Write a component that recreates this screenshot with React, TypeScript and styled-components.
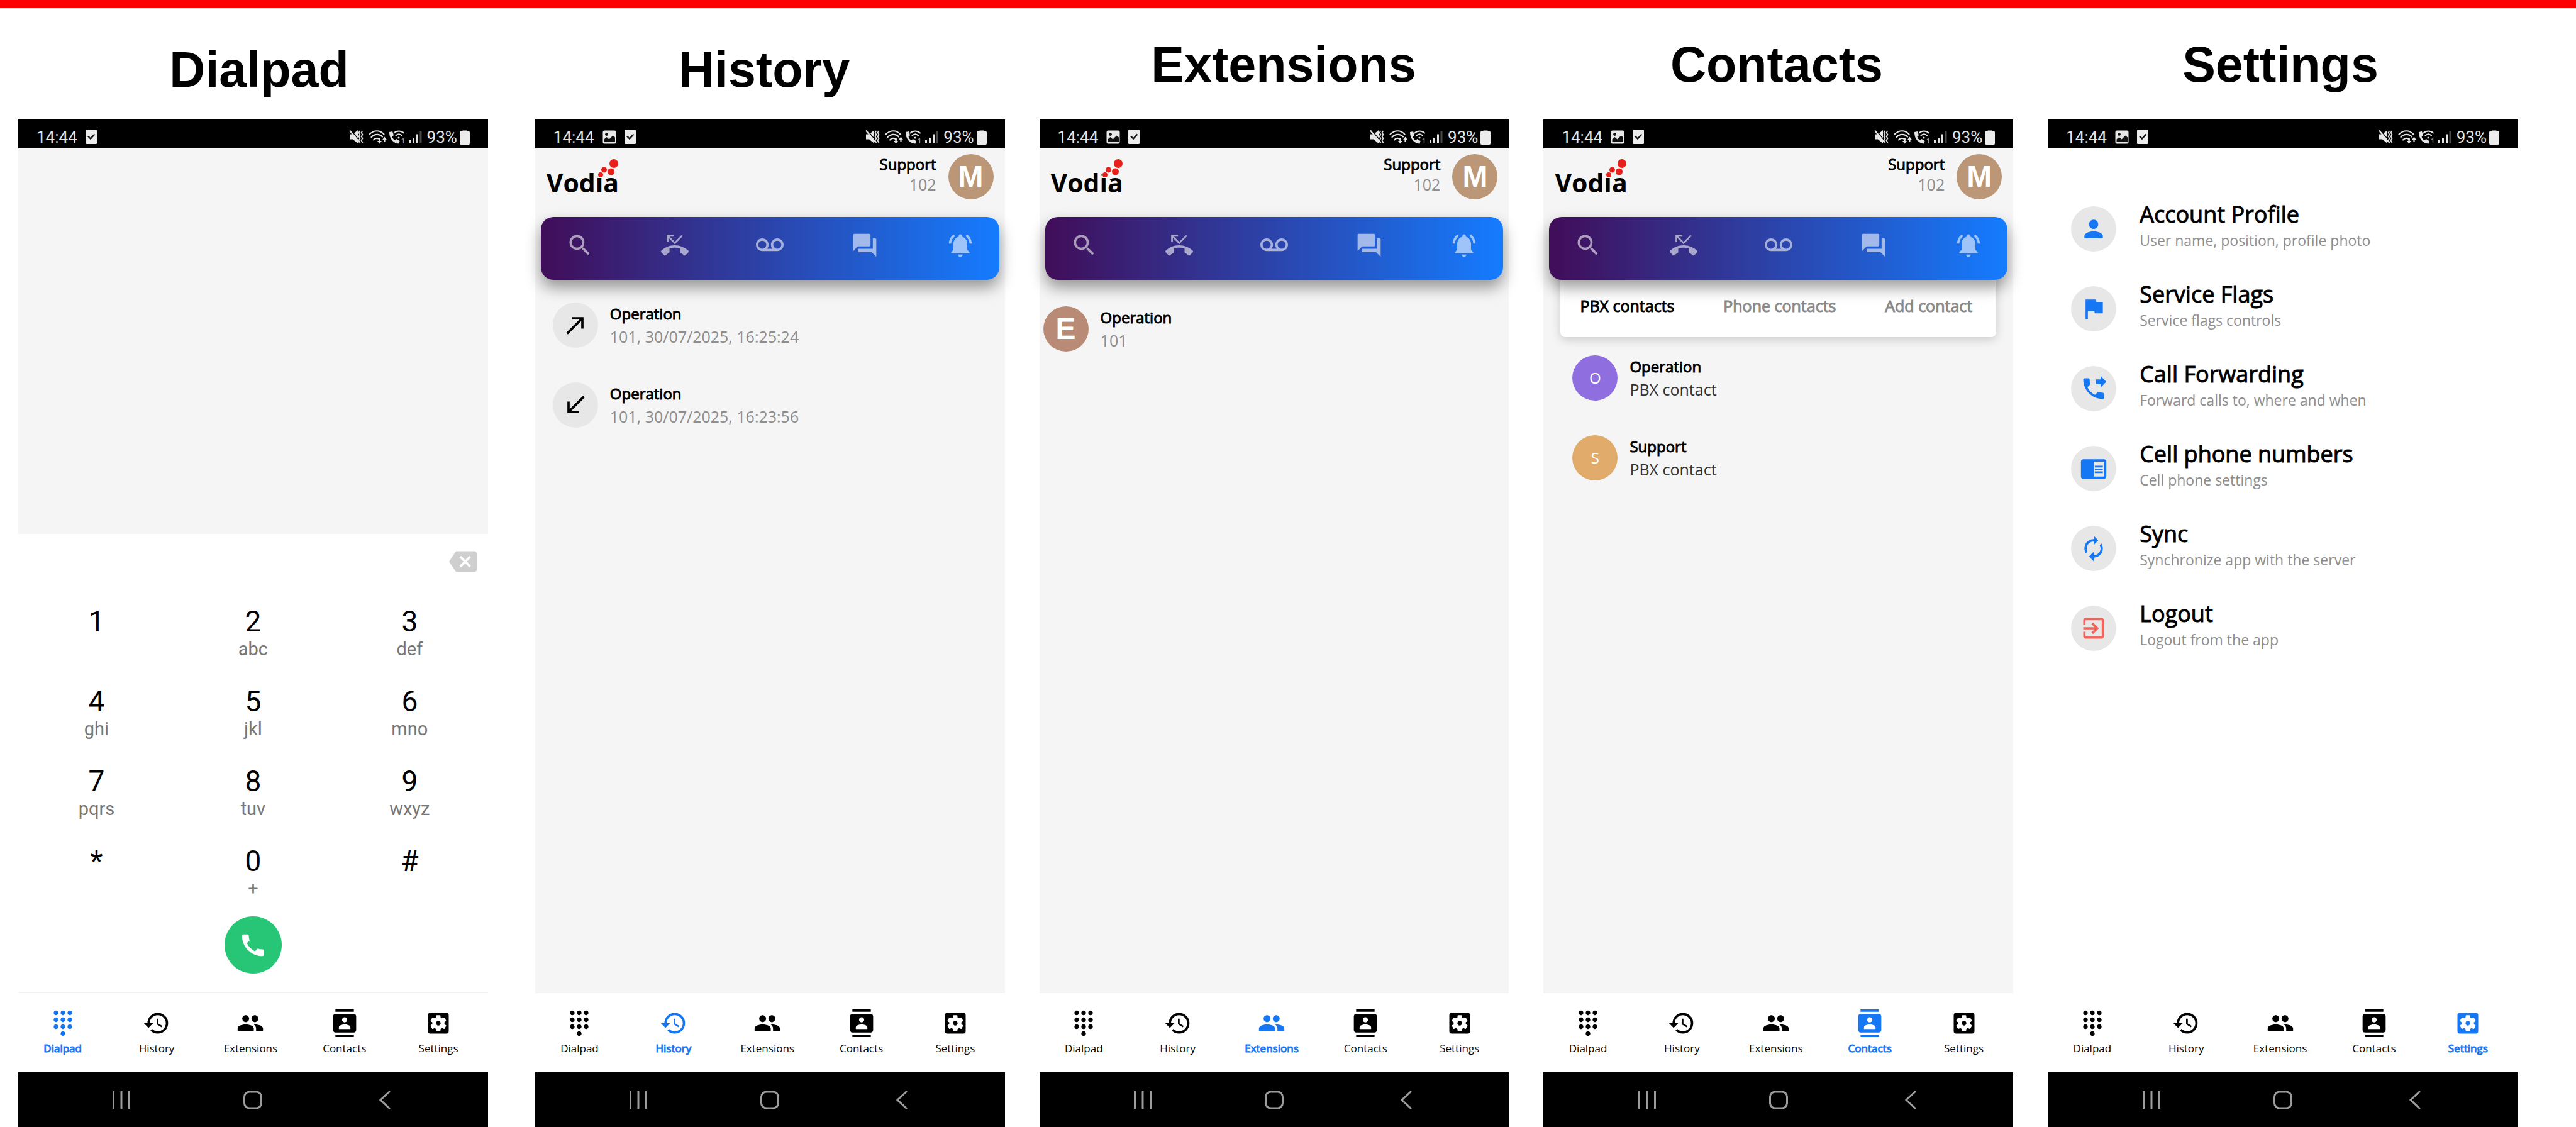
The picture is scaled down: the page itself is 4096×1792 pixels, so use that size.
import React from "react";
import styled, { createGlobalStyle } from "styled-components";
import type { IconType } from "react-icons";
import {
  MdAutorenew,
  MdBackspace,
  MdCall,
  MdCallMade,
  MdCallReceived,
  MdChromeReaderMode,
  MdContacts,
  MdDialpad,
  MdExitToApp,
  MdFlag,
  MdForum,
  MdHistory,
  MdNotificationsActive,
  MdPeople,
  MdPerson,
  MdPhoneForwarded,
  MdPhoneMissed,
  MdSearch,
  MdSettingsApplications,
  MdVoicemail,
} from "react-icons/md";

const BLUE = "#1677f5";
const UI_FONT = '"Open Sans", "Noto Sans", sans-serif';
const HEADING_FONT = '"Liberation Sans", Arial, sans-serif';
const SYSTEM_FONT = "Roboto, sans-serif";

const GlobalStyle = createGlobalStyle`
  *, *::before, *::after { box-sizing: border-box; }
  body { margin: 0; background: #fff; color: #000; font-family: ${UI_FONT}; }
  button {
    margin: 0; padding: 0; border: 0; background: none;
    font: inherit; color: inherit; cursor: pointer;
  }
  h1, h2, p, ul { margin: 0; padding: 0; }
  ul { list-style: none; }
  svg { display: block; }
`;

/* ---------- Page ---------- */

const Page = styled.main`
  display: flex;
  flex-direction: column;
  min-height: 100vh;
  border-top: 13px solid #ff0000;
`;

const Titles = styled.header`
  display: grid;
  grid-template-columns: 824fr 782fr 870fr 698fr 904fr 18fr;
  height: 177px;
  padding-top: 44px;
`;

const Title = styled.h1<{ $low?: boolean }>`
  padding-top: ${(p) => (p.$low ? 8 : 0)}px;
  font: bold 79px/92px ${HEADING_FONT};
  text-align: center;
`;

const Phones = styled.div`
  display: flex;
  flex: 1;
  gap: 55px;
  padding: 0 93px 0 29px;
`;

const Phone = styled.section<{ $spaced?: boolean }>`
  display: flex;
  flex: 1 1 0;
  flex-direction: column;
  margin-right: ${(p) => (p.$spaced ? 20 : 0)}px;
`;

const Screen = styled.div<{ $tone?: string }>`
  display: flex;
  flex: 1;
  flex-direction: column;
  background: ${(p) => p.$tone ?? "#f5f5f5"};
`;

/* ---------- Status bar ---------- */

const StatusBar = styled.div`
  display: flex;
  align-items: center;
  justify-content: space-between;
  height: 46px;
  padding: 9px 29px 0;
  background: #000;
  color: #e4e4e4;
  font: 26px/30px ${SYSTEM_FONT};
`;

const StatusGroup = styled.div<{ $gap: number }>`
  display: flex;
  align-items: center;
  gap: ${(p) => p.$gap}px;
`;

const Battery = styled.span`
  display: flex;
  align-items: center;
  gap: 4px;
`;

const ImageGlyph = () => (
  <svg width="22" height="22" viewBox="0 0 22 22" aria-hidden="true">
    <rect x="0.5" y="0.5" width="21" height="21" rx="2.5" fill="#e8e8e8" />
    <circle cx="6.5" cy="6.5" r="2.4" fill="#111" />
    <path d="M2.5 18.5v-4l4-3.5 4 3.5 6-6 3.5 3v7z" fill="#111" />
  </svg>
);

const TaskGlyph = () => (
  <svg width="18" height="23" viewBox="0 0 18 23" aria-hidden="true">
    <rect width="18" height="23" rx="1.5" fill="#ececec" />
    <path d="M4 10.5l4 4 6.5-7" fill="none" stroke="#111" strokeWidth="2.4" />
  </svg>
);

const SignalGlyphs = () => (
  <svg width="116" height="26" viewBox="0 0 116 26" aria-hidden="true">
    {/* muted with vibration */}
    <path d="M1 8.5h5L14 2v21l-8-6.5H1z" fill="#e8e8e8" />
    <path d="M2.500 1.500l14 17" stroke="#000" strokeWidth="1.4" />
    <path d="M1 2.500L16 21" stroke="#e8e8e8" strokeWidth="2.2" />
    <path
      d="M17.500 3l-2 3 2 3-2 3 2 3-2 3 2 4M21.500 3l-2 3 2 3-2 3 2 3-2 3 2 4"
      fill="none"
      stroke="#e4e4e4"
      strokeWidth="1.8"
    />
    {/* wifi with traffic arrows */}
    <g fill="none" stroke="#e4e4e4" strokeWidth="2.2" strokeLinecap="round">
      <path d="M32.500 8.500c7-7 17-7 23 0" />
      <path d="M35.500 13c5-5.500 13-5.500 17.500-.5" />
      <path d="M39 17.500c3-3.500 7.500-3.500 10-.5" />
    </g>
    <path d="M48.500 23.500l-3.500-4.500h2.400v-4h2.400v4H52z" fill="#e4e4e4" />
    <path d="M56.500 12.500l3.300 4.500h-2.200v4h-2.200v-4h-2.200z" fill="#e4e4e4" />
    {/* wifi calling */}
    <path
      d="M64 5c0 11 6.500 18 15.500 18.500l1-4.500-5-3-2.500 2c-2-1-3.800-3.500-4.500-5.500l2.500-2.500L69 4z"
      fill="#e4e4e4"
    />
    <g fill="none" stroke="#e4e4e4" strokeWidth="2" strokeLinecap="round">
      <path d="M71.500 6.500c4.500-4 11-4 15.500 0" />
      <path d="M74.500 10.500c3-2.800 6.500-2.800 9.500 0" />
    </g>
    <circle cx="79" cy="14" r="1.6" fill="#e4e4e4" />
    <text x="83" y="23" fill="#b5b5b5" fontFamily="Roboto, sans-serif" fontSize="11">
      1
    </text>
    {/* signal strength */}
    <path d="M95 18h3v5h-3zM101 14h3v9h-3zM107 8.500h3V23h-3z" fill="#e4e4e4" />
    <path d="M112.500 3h3v20h-3z" fill="#4a4a4a" />
  </svg>
);

const BatteryGlyph = () => (
  <svg width="16" height="24" viewBox="0 0 16 24" aria-hidden="true">
    <path d="M4.500 0h7v3h-7z" fill="#777" />
    <rect y="2.5" width="16" height="21.5" rx="2" fill="#ececec" />
  </svg>
);

const Status = ({ withImage }: { withImage: boolean }) => (
  <StatusBar>
    <StatusGroup $gap={13}>
      <span>14:44</span>
      {withImage && <ImageGlyph />}
      <TaskGlyph />
    </StatusGroup>
    <StatusGroup $gap={8}>
      <SignalGlyphs />
      <Battery>
        93%
        <BatteryGlyph />
      </Battery>
    </StatusGroup>
  </StatusBar>
);

/* ---------- App header ---------- */

const AppHeader = styled.div`
  display: flex;
  align-items: flex-start;
  height: 109px;
  padding: 9px 18px 0;
`;

const Logo = styled.div`
  position: relative;
  margin: 18px auto 0 0;
  font: bold 41px/54px ${UI_FONT};
`;

const LogoDots = styled.svg`
  position: absolute;
  top: -11px;
  left: 81px;
`;

const Account = styled.div`
  margin-right: 19px;
  text-align: right;
  line-height: 32px;
`;

const Name = styled.p`
  font-size: 24px;
  -webkit-text-stroke: 1px currentColor;
`;

const Detail = styled.p<{ $dark?: boolean }>`
  color: ${(p) => (p.$dark ? "#333" : "#8e8e8e")};
  font-size: 25px;
`;

const Avatar = styled.span<{ $tone: string; $letter?: boolean }>`
  display: flex;
  flex: none;
  align-items: center;
  justify-content: center;
  width: 72px;
  height: 72px;
  border-radius: 50%;
  background: ${(p) => p.$tone};
  color: #fff;
  font: ${(p) => (p.$letter ? `bold 48px/54px ${HEADING_FONT}` : `24px/34px ${UI_FONT}`)};
`;

const IconDisc = styled(Avatar).attrs({ $tone: "#e7e7e7" })<{ $ink?: string }>`
  color: ${(p) => p.$ink ?? "#000"};
`;

const Toolbar = styled.nav`
  position: relative;
  display: flex;
  flex: none;
  align-items: center;
  justify-content: space-between;
  height: 100px;
  margin: 0 9px;
  padding: 0 40px 10px;
  border-radius: 20px;
  background: linear-gradient(90deg, #410d58, #157cff);
  box-shadow: 0 12px 24px rgba(0, 0, 0, 0.4);
  color: rgba(255, 255, 255, 0.58);
`;

const TOOLS: [string, IconType][] = [
  ["Search", MdSearch],
  ["Missed calls", MdPhoneMissed],
  ["Voicemail", MdVoicemail],
  ["Messages", MdForum],
  ["Notifications", MdNotificationsActive],
];

const AppTop = () => (
  <>
    <AppHeader>
      <Logo>
        Vodia
        <LogoDots width="34" height="38" viewBox="0 0 34 38" aria-hidden="true">
          <circle cx="5" cy="25.5" r="5.5" fill="#f5f5f5" />
          <g fill="#e8201c">
            <circle cx="26" cy="8" r="7" />
            <circle cx="10.5" cy="18" r="4.5" />
            <circle cx="21.5" cy="21" r="5.5" />
            <circle cx="5" cy="26" r="4" />
          </g>
        </LogoDots>
      </Logo>
      <Account>
        <Name>Support</Name>
        <Detail>102</Detail>
      </Account>
      <Avatar $tone="#bb9777" $letter>
        M
      </Avatar>
    </AppHeader>
    <Toolbar aria-label="Shortcuts">
      {TOOLS.map(([label, Icon]) => (
        <button key={label} type="button" aria-label={label}>
          <Icon size={44} />
        </button>
      ))}
    </Toolbar>
  </>
);

/* ---------- Lists ---------- */

const List = styled.ul<{ $top: number; $left: number }>`
  display: flex;
  flex-direction: column;
  gap: 55px;
  padding: ${(p) => p.$top}px 20px 0 ${(p) => p.$left}px;
`;

const Row = styled.li`
  display: flex;
  align-items: center;
  gap: 19px;
  line-height: 36px;
`;

const Tabs = styled.div`
  display: flex;
  justify-content: space-between;
  margin: -10px 27px 0;
  padding: 35px 38px 34px 31px;
  border-radius: 0 0 8px 8px;
  background: #fff;
  box-shadow: 0 4px 16px rgba(0, 0, 0, 0.18);
`;

const Tab = styled.button<{ $active?: boolean }>`
  color: ${(p) => (p.$active ? "#000" : "#8a8a8a")};
  font-size: 25px;
  line-height: 32px;
  -webkit-text-stroke: 1px currentColor;
`;

/* ---------- Settings ---------- */

const SettingsList = styled.ul`
  display: flex;
  flex-direction: column;
  gap: 45px;
  padding: 82px 20px 0 37px;
`;

const Setting = styled.button`
  display: flex;
  align-items: flex-end;
  gap: 37px;
  text-align: left;
  line-height: 36px;
`;

const SettingName = styled.p`
  font-size: 36px;
  line-height: 46px;
  -webkit-text-stroke: 1px currentColor;
`;

const SettingDetail = styled(Detail)`
  font-size: 23px;
`;

const SETTINGS: [string, string, IconType, string][] = [
  ["Account Profile", "User name, position, profile photo", MdPerson, BLUE],
  ["Service Flags", "Service flags controls", MdFlag, BLUE],
  ["Call Forwarding", "Forward calls to, where and when", MdPhoneForwarded, BLUE],
  ["Cell phone numbers", "Cell phone settings", MdChromeReaderMode, BLUE],
  ["Sync", "Synchronize app with the server", MdAutorenew, BLUE],
  ["Logout", "Logout from the app", MdExitToApp, "#f0655c"],
];

/* ---------- Dialpad ---------- */

const DialDisplay = styled.div`
  flex: 1;
  background: #f5f5f5;
`;

const EraseRow = styled.div`
  display: flex;
  align-items: flex-start;
  justify-content: flex-end;
  height: 112px;
  padding: 22px 18px 0;
  color: #cfcfcf;
`;

const Keys = styled.div`
  display: grid;
  grid-template-columns: repeat(3, 1fr);
  grid-auto-rows: 88px;
  row-gap: 39px;
`;

const Key = styled.button`
  display: flex;
  flex-direction: column;
  align-items: center;
  font: 46px/54px ${SYSTEM_FONT};
`;

const KeyLetters = styled.span`
  color: #777;
  font-size: 29px;
  line-height: 34px;
`;

const CallButton = styled.button`
  display: flex;
  align-items: center;
  justify-content: center;
  align-self: center;
  width: 91px;
  height: 91px;
  margin: 27px 0 29px;
  border-radius: 50%;
  background: #27c676;
  color: #fff;
`;

const KEYS: [string, string][] = [
  ["1", ""],
  ["2", "abc"],
  ["3", "def"],
  ["4", "ghi"],
  ["5", "jkl"],
  ["6", "mno"],
  ["7", "pqrs"],
  ["8", "tuv"],
  ["9", "wxyz"],
  ["*", ""],
  ["0", "+"],
  ["#", ""],
];

/* ---------- Bottom bars ---------- */

const TabBar = styled.nav<{ $line: boolean }>`
  display: grid;
  grid-template-columns: repeat(5, 1fr);
  height: 128px;
  padding-top: 26px;
  border-top: 2px solid ${(p) => (p.$line ? "#f1f1f1" : "#fff")};
  background: #fff;
`;

const TabLink = styled.a<{ $active: boolean }>`
  display: flex;
  flex-direction: column;
  align-items: center;
  gap: 6px;
  padding-right: 8px;
  color: ${(p) => (p.$active ? BLUE : "#000")};
  font-size: 17px;
  line-height: 24px;
  text-decoration: none;
  -webkit-text-stroke: ${(p) => (p.$active ? "1px currentColor" : "0")};
`;

const SystemBar = styled.div`
  display: grid;
  grid-template-columns: repeat(3, 209px);
  justify-content: center;
  height: 87px;
  background: #000;
`;

const SystemButton = styled.button`
  display: flex;
  align-items: center;
  justify-content: center;
`;

const NAV: [string, IconType][] = [
  ["Dialpad", MdDialpad],
  ["History", MdHistory],
  ["Extensions", MdPeople],
  ["Contacts", MdContacts],
  ["Settings", MdSettingsApplications],
];

const SYSTEM: [string, string][] = [
  ["Recent apps", "M3.500 2v28M16 2v28M28.500 2v28"],
  ["Home", "M10.500 3h11a8 8 0 0 1 8 8v10a8 8 0 0 1-8 8h-11a8 8 0 0 1-8-8V11a8 8 0 0 1 8-8z"],
  ["Back", "M25 2L10 16l15 14"],
];

const BottomBars = ({ active }: { active: string }) => (
  <>
    <TabBar $line={active !== "Settings"} aria-label="Main">
      {NAV.map(([label, Icon]) => (
        <TabLink
          key={label}
          href={`#${label.toLowerCase()}`}
          $active={label === active}
          aria-current={label === active ? "page" : undefined}
        >
          <Icon size={44} />
          {label}
        </TabLink>
      ))}
    </TabBar>
    <SystemBar>
      {SYSTEM.map(([label, path]) => (
        <SystemButton key={label} type="button" aria-label={label}>
          <svg width="32" height="32" viewBox="0 0 32 32">
            <path d={path} fill="none" stroke="#9c9c9c" strokeWidth="3" />
          </svg>
        </SystemButton>
      ))}
    </SystemBar>
  </>
);

/* ---------- Screens ---------- */

const DialpadScreen = () => (
  <Screen $tone="#fff">
    <DialDisplay />
    <EraseRow>
      <button type="button" aria-label="Erase">
        <MdBackspace size={44} />
      </button>
    </EraseRow>
    <Keys>
      {KEYS.map(([digit, letters]) => (
        <Key key={digit} type="button">
          {digit}
          {letters && <KeyLetters>{letters}</KeyLetters>}
        </Key>
      ))}
    </Keys>
    <CallButton type="button" aria-label="Call">
      <MdCall size={46} />
    </CallButton>
  </Screen>
);

const CALLS: [IconType, string][] = [
  [MdCallMade, "101, 30/07/2025, 16:25:24"],
  [MdCallReceived, "101, 30/07/2025, 16:23:56"],
];

const HistoryScreen = () => (
  <Screen>
    <AppTop />
    <List $top={36} $left={28}>
      {CALLS.map(([Icon, detail]) => (
        <Row key={detail}>
          <IconDisc>
            <Icon size={44} />
          </IconDisc>
          <div>
            <Name>Operation</Name>
            <Detail>{detail}</Detail>
          </div>
        </Row>
      ))}
    </List>
  </Screen>
);

const ExtensionsScreen = () => (
  <Screen>
    <AppTop />
    <List $top={42} $left={6}>
      <Row>
        <Avatar $tone="#b98b76" $letter>
          E
        </Avatar>
        <div>
          <Name>Operation</Name>
          <Detail>101</Detail>
        </div>
      </Row>
    </List>
  </Screen>
);

const CONTACTS: [string, string][] = [
  ["Operation", "#8f6fdf"],
  ["Support", "#e0ab6b"],
];

const ContactsScreen = () => (
  <Screen>
    <AppTop />
    <Tabs>
      <Tab type="button" $active>
        PBX contacts
      </Tab>
      <Tab type="button">Phone contacts</Tab>
      <Tab type="button">Add contact</Tab>
    </Tabs>
    <List $top={29} $left={46}>
      {CONTACTS.map(([name, tone]) => (
        <Row key={name}>
          <Avatar $tone={tone}>{name[0]}</Avatar>
          <div>
            <Name>{name}</Name>
            <Detail $dark>PBX contact</Detail>
          </div>
        </Row>
      ))}
    </List>
  </Screen>
);

const SettingsScreen = () => (
  <Screen $tone="#fff">
    <SettingsList>
      {SETTINGS.map(([name, detail, Icon, ink]) => (
        <li key={name}>
          <Setting type="button">
            <IconDisc $ink={ink}>
              <Icon size={44} />
            </IconDisc>
            <div>
              <SettingName>{name}</SettingName>
              <SettingDetail>{detail}</SettingDetail>
            </div>
          </Setting>
        </li>
      ))}
    </SettingsList>
  </Screen>
);

const SCREENS: [string, React.ComponentType][] = [
  ["Dialpad", DialpadScreen],
  ["History", HistoryScreen],
  ["Extensions", ExtensionsScreen],
  ["Contacts", ContactsScreen],
  ["Settings", SettingsScreen],
];

export default function App() {
  return (
    <>
      <GlobalStyle />
      <Page>
        <Titles>
          {SCREENS.map(([name], i) => (
            <Title key={name} id={`title-${name}`} $low={i < 2}>
              {name}
            </Title>
          ))}
        </Titles>
        <Phones>
          {SCREENS.map(([name, Content], i) => (
            <Phone key={name} aria-labelledby={`title-${name}`} $spaced={i === 0}>
              <Status withImage={i > 0} />
              <Content />
              <BottomBars active={name} />
            </Phone>
          ))}
        </Phones>
      </Page>
    </>
  );
}
